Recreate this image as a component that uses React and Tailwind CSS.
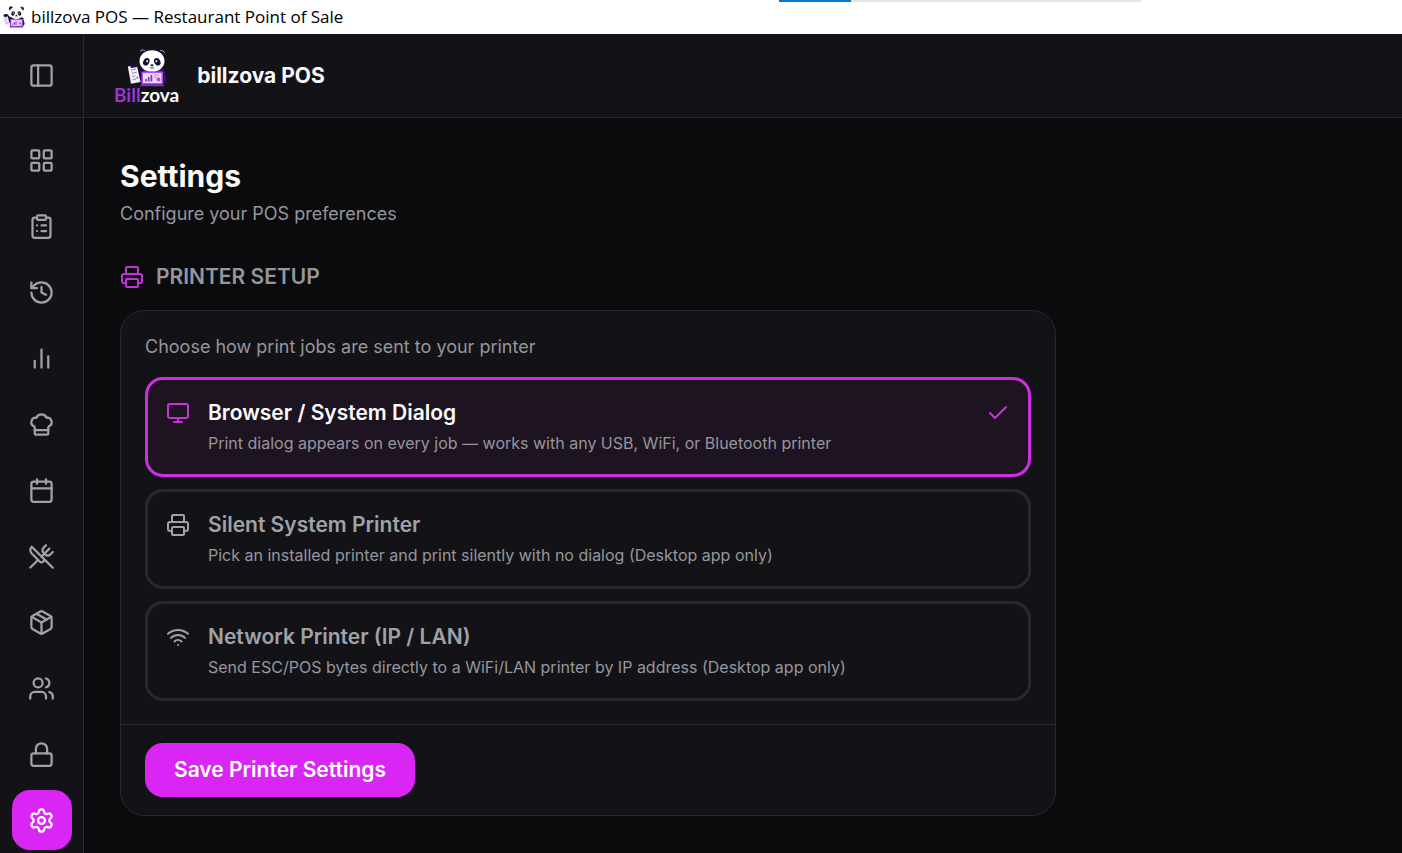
import { useState } from "react";
import {
  Calendar,
  Check,
  ChefHat,
  ClipboardList,
  History,
  LayoutGrid,
  Lock,
  Monitor,
  Package,
  PanelLeft,
  Printer,
  Settings,
  Users,
  UtensilsCrossed,
  Wifi,
} from "lucide-react";

const BarsIcon = ({ size = 24 }) => (
  <svg
    width={size}
    height={size}
    viewBox="0 0 24 24"
    fill="none"
    stroke="currentColor"
    strokeWidth="2"
    strokeLinecap="round"
    strokeLinejoin="round"
  >
    <path d="M18 20V10M12 20V4M6 20v-6" />
  </svg>
);

const Panda = ({ className, outline }) => (
  <svg viewBox="0 0 40 38" className={className} aria-hidden="true">
    {/* ears */}
    <circle cx="15.500" cy="4.500" r="3.600" fill="#1c0f38" />
    <circle cx="34.500" cy="5" r="3.600" fill="#1c0f38" />
    <path d="M13 2.200c1.200-1.500 3.500-1.800 5-.4M33 1.800c2-.8 4.300.2 4.900 2.200" fill="none" stroke={outline} strokeWidth="0.8" />
    {/* body and arms */}
    <path d="M13 20c3-3 21-3 24 1l2.500 10-3.500 5H14z" fill="#35156b" />
    <path d="M2 19c0-5 5-7 8-4l7 7-2 7-9-3z" fill="#1c0f38" />
    {/* head */}
    <ellipse cx="25" cy="12" rx="12.500" ry="10.800" fill="#fff" />
    <ellipse cx="19.300" cy="12.800" rx="3" ry="3.900" transform="rotate(28 19.3 12.8)" fill="#170d2c" />
    <ellipse cx="30.300" cy="12.800" rx="3" ry="3.900" transform="rotate(-28 30.3 12.8)" fill="#170d2c" />
    <circle cx="20.200" cy="12.200" r="1" fill="#fff" />
    <circle cx="29.400" cy="12.200" r="1" fill="#fff" />
    <ellipse cx="25" cy="16.200" rx="1.500" ry="1" fill="#170d2c" />
    <path d="M22.800 18.400c.8 1 1.700 1 2.200 0 .5 1 1.400 1 2.200 0" fill="none" stroke="#170d2c" strokeWidth="0.800" />
    {/* receipt */}
    <path d="M.8 17.500l9-1.500 3.700 17-9.500 1.800z" fill="#f2edff" />
    <path d="M4 21l5-1M4.700 24.300l5-1M5.400 27.600l3-.6M6 30.600l3-.6" stroke="#8b7ab0" strokeWidth="0.900" />
    <path d="M9.500 29l1.600-.4" stroke="#a83fe0" strokeWidth="1.500" />
    <path d="M3 16.500c1-3 5-4 8-1l-1 2.500-6 1z" fill="#1c0f38" />
    {/* screen */}
    <rect x="14.500" y="22.500" width="21.500" height="13" rx="1" fill="#b04df0" />
    <rect x="16" y="24" width="18.500" height="10" rx="0.500" fill="#ecd6fc" />
    <path d="M19 32.500v-2.500M21.700 32.500v-4.500M24.400 32.500v-6.500" stroke="#8b2fd0" strokeWidth="1.700" />
    <path d="M27 26h5M27 28.300h3" stroke="#b88fd8" strokeWidth="1" />
    <circle cx="31.500" cy="30.500" r="1.900" fill="#d63fa8" />
    <path d="M13 36.500h24" stroke="#7a2fc0" strokeWidth="1.500" />
  </svg>
);

const navItems = [
  { label: "Dashboard", icon: LayoutGrid },
  { label: "Orders", icon: ClipboardList },
  { label: "History", icon: History },
  { label: "Reports", icon: BarsIcon },
  { label: "Kitchen", icon: ChefHat },
  { label: "Reservations", icon: Calendar },
  { label: "Menu", icon: UtensilsCrossed },
  { label: "Inventory", icon: Package },
  { label: "Staff", icon: Users },
  { label: "Lock", icon: Lock },
  { label: "Settings", icon: Settings },
];

const printerModes = [
  {
    id: "browser",
    icon: Monitor,
    title: "Browser / System Dialog",
    text: "Print dialog appears on every job — works with any USB, WiFi, or Bluetooth printer",
  },
  {
    id: "silent",
    icon: Printer,
    title: "Silent System Printer",
    text: "Pick an installed printer and print silently with no dialog (Desktop app only)",
  },
  {
    id: "network",
    icon: Wifi,
    title: "Network Printer (IP / LAN)",
    text: "Send ESC/POS bytes directly to a WiFi/LAN printer by IP address (Desktop app only)",
  },
];

const TitleBar = () => (
  <div className="relative flex h-[34px] items-center gap-1.5 bg-white px-0.5 font-['Open_Sans',sans-serif] text-[17px] text-black">
    <Panda className="h-6 w-[23px]" outline="#1c0f38" />
    <span>billzova POS — Restaurant Point of Sale</span>
    {/* Page load progress */}
    <div className="absolute top-0 left-[779px] h-0.5 w-[362px] bg-[#e6e6e6]">
      <div className="h-full w-1/5 bg-[#0078d4]" />
    </div>
  </div>
);

const Sidebar = ({ page, setPage }) => (
  <aside className="flex w-[84px] shrink-0 flex-col border-r border-[#29292d] bg-[#131317] text-[#a1a1aa]">
    <div className="flex h-[84px] items-center justify-center border-b border-[#29292d]">
      <button aria-label="Toggle sidebar">
        <PanelLeft size={27} />
      </button>
    </div>
    <nav className="flex flex-col items-center gap-1.5 pt-3">
      {navItems.map(({ label, icon: Icon }) => (
        <button
          key={label}
          aria-label={label}
          onClick={() => setPage(label)}
          className={`flex size-[60px] items-center justify-center rounded-[18px] ${
            page === label ? "bg-[#d926f5] text-white" : "hover:bg-[#1f1f24]"
          }`}
        >
          <Icon size={27} />
        </button>
      ))}
    </nav>
  </aside>
);

const Header = () => (
  <header className="flex h-[84px] items-center gap-[18px] border-b border-[#29292d] bg-[#131317] px-[30px]">
    <div className="flex flex-col items-center">
      <Panda className="h-[38px] w-10" outline="#cfc4ea" />
      <span className="font-['Lato',sans-serif] text-[19px] leading-4 font-bold text-white">
        <span className="text-[#9a35d6]">Bill</span>zova
      </span>
    </div>
    <span className="text-[21px] font-bold text-[#fafafa]">billzova POS</span>
  </header>
);

const PrinterOption = ({ mode, active, onSelect }) => {
  const Icon = mode.icon;
  return (
    <button
      onClick={onSelect}
      aria-pressed={active}
      className={`flex items-start gap-[18px] rounded-[18px] border-3 p-[18px] text-left ${
        active ? "border-[#cb30e0] bg-[#1d1321]" : "border-[#29292d]"
      }`}
    >
      <Icon size={24} className={`mt-[3px] shrink-0 ${active ? "text-[#c234d8]" : "text-[#a1a1aa]"}`} />
      <span className="flex-1">
        <span className={`block text-[21px] leading-[30px] font-semibold ${active ? "text-[#fafafa]" : "text-[#a1a1aa]"}`}>
          {mode.title}
        </span>
        <span className="mt-0.5 block text-base leading-[26px] text-[#96969e]">{mode.text}</span>
      </span>
      {active && <Check size={24} className="mt-[3px] shrink-0 text-[#c234d8]" />}
    </button>
  );
};

const SettingsPage = () => {
  const [mode, setMode] = useState("browser");

  return (
    <main className="flex-1 px-9 pt-9">
      <h1 className="text-[30px] leading-[44px] font-bold text-[#fafafa]">Settings</h1>
      <p className="text-lg leading-8 text-[#96969e]">Configure your POS preferences</p>

      <section className="mt-8 max-w-[936px]">
        <h2 className="mb-[18px] flex items-center gap-3 text-[21px] leading-[30px] font-semibold text-[#96969e]">
          <Printer size={24} className="text-[#c234d8]" />
          PRINTER SETUP
        </h2>

        <div className="rounded-3xl border border-[#29292d] bg-[#131317]">
          <div className="flex flex-col gap-3 px-6 pt-6 pb-[23px]">
            <p className="mb-1.5 text-lg leading-6 text-[#96969e]">Choose how print jobs are sent to your printer</p>
            {printerModes.map((m) => (
              <PrinterOption key={m.id} mode={m} active={mode === m.id} onSelect={() => setMode(m.id)} />
            ))}
          </div>

          {/* Footer */}
          <div className="border-t border-[#29292d] px-6 py-[18px]">
            <button className="h-[54px] rounded-[18px] bg-[#d926f5] px-[29px] text-[21px] font-semibold text-white">
              Save Printer Settings
            </button>
          </div>
        </div>
      </section>
    </main>
  );
};

const App = () => {
  const [page, setPage] = useState("Settings");

  return (
    <div className="flex min-h-screen flex-col bg-[#0b0b0d] font-['Inter',sans-serif]">
      <TitleBar />
      <div className="flex flex-1">
        <Sidebar page={page} setPage={setPage} />
        <div className="flex min-w-0 flex-1 flex-col">
          <Header />
          <SettingsPage />
        </div>
      </div>
    </div>
  );
};

export default App;
